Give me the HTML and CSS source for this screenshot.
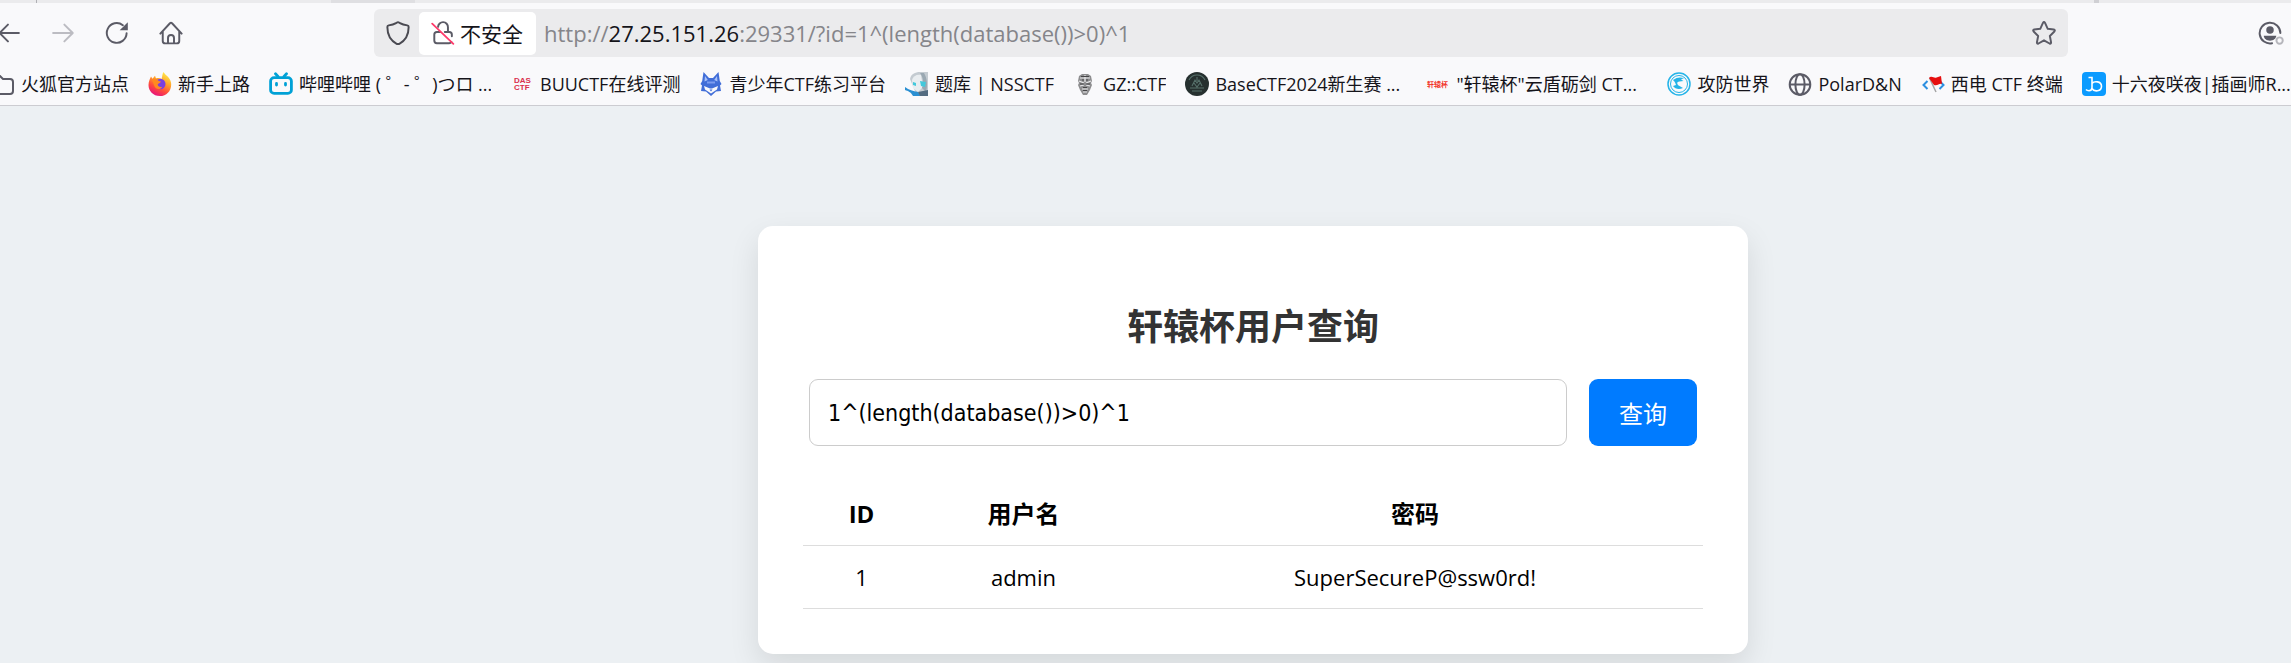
FILE: index.html
```html
<!DOCTYPE html>
<html lang="zh-CN">
<head>
<meta charset="utf-8">
<title>轩辕杯用户查询</title>
<link rel="stylesheet" href="styles.css">
</head>
<body>
<header class="browser">
  <div class="tabstrip"><span class="tick"></span><span class="tab-edge"></span><span class="tick tick-end"></span></div>
  <div class="toolbar">
    <nav class="nav" aria-label="导航">
      <button class="tool" aria-label="后退"><svg viewBox="0 0 16 16"><path d="M14.6 8H2M7.3 2.4 1.7 8l5.6 5.6" /></svg></button>
      <button class="tool tool-off" aria-label="前进" disabled><svg viewBox="0 0 16 16"><path d="M1.4 8h13M8.9 2.4 14.5 8l-5.6 5.6" /></svg></button>
      <button class="tool" aria-label="刷新"><svg viewBox="0 0 16 16"><path d="M14.4 8.2A6.6 6.6 0 1 1 11.9 2.8" /><path class="solid" d="M15.2.9v5.2H9.8z" /></svg></button>
      <button class="tool" aria-label="主页"><svg viewBox="0 0 16 16"><path d="M.9 8.4 7.3 1.5q.7-.6 1.4 0l6.4 6.9M2.5 7v6.3q0 1.6 1.6 1.6h7.8q1.6 0 1.6-1.6V7M6 14.8v-3.5a2 2 0 0 1 4 0v3.5" /></svg></button>
    </nav>
    <div class="urlbar">
      <button class="shield" aria-label="跟踪保护"><svg viewBox="0 0 16 16"><path d="M8 .8c.5 0 .8.3 1.300.6 1.500.9 3.200 1.300 4.900 1.500.6.100.9.500.9 1.100 0 4.700-1.600 8.700-6.200 11.200q-.9.400-1.800 0C2.500 12.700.9 8.700.9 4c0-.6.3-1 .9-1.100 1.700-.2 3.400-.6 4.900-1.500.5-.3.800-.6 1.300-.6z" /></svg></button>
      <button class="identity"><svg viewBox="0 0 16 16"><path d="M4.700 3.900A3.300 3.300 0 0 1 11.300 4.200v3M2.200 13V9q0-1.700 1.700-1.700h2.200M9.200 7.300h3q1.700 0 1.700 1.700v1.200M2.200 13q0 1.800 1.700 1.800h8.200q1 0 1.500-.7" /><path class="slash" d="M.8 1.800 14.900 15.200" /></svg><span>不安全</span></button>
      <div class="url">http://<b>27.25.151.26</b>:29331/?id=1^(length(database())&gt;0)^1</div>
      <button class="star" aria-label="添加书签"><svg viewBox="0 0 16 16"><path d="M7.300 1.300q.7-1.200 1.400 0l1.800 3.900 4 .5q1.200.3.4 1.300L11.900 10l.8 4.200q.1 1.200-1 .8L8 12.900 4.300 15q-1.100.4-1-.8L4.100 10 1.100 7q-.8-1 .4-1.300l4-.5z" /></svg></button>
    </div>
    <button class="tool account" aria-label="账户"><svg viewBox="0 0 18 16"><path d="M9.400 14.800A6.900 6.900 0 1 1 14.900 8" /><circle class="solid" cx="8" cy="6" r="2.500" /><path class="solid" d="M3.800 9.800h8.400c-.2 2-2 3.300-4.200 3.300s-4-1.300-4.200-3.300z" /><circle class="badge" cx="14.400" cy="13" r="2.100" /></svg></button>
  </div>
  <nav class="bookmarks" aria-label="书签">
    <a class="bm" href="#"><svg viewBox="0 0 24 24"><path class="line" d="M1 19V6q0-2 2-2h6l3 3h7q3 0 3 3v9q0 3-3 3H4q-3 0-3-3z" /></svg><span>火狐官方站点</span></a>
    <a class="bm" href="#"><svg viewBox="0 0 24 24">
      <defs><linearGradient id="fx" x1=".8" y1="0" x2=".3" y2="1"><stop offset="0" stop-color="#fff44f"/><stop offset=".4" stop-color="#ffa02a"/><stop offset=".7" stop-color="#ff4a3d"/><stop offset="1" stop-color="#e6107f"/></linearGradient></defs>
      <path fill="url(#fx)" d="M15.500 0c1.500 3 6.500 5 7.500 10.500C24.200 18 19 24 12 24 5 24 .5 19 .5 13 .5 9.500 2 6.500 3 4.500l1.500 2.300L7 3.800 8 6.500C10 5.600 12 6 13.500 7 14.500 5 14 2 15.500 0z"/><circle cx="12.300" cy="12" r="5.200" fill="#7a3fe0"/><path fill="#ff8a1f" d="M4 7c2 0 4-.5 5 0 .6 1.400 2 2.200 4 2.500-.5 1.600-2.800 1.800-3.300 3 .1 2 2.200 3 4.600 2.200C12.500 18 7 18 6 13 5.500 11 4 9 4 7z"/></svg><span>新手上路</span></a>
    <a class="bm bm-cut" href="#"><svg viewBox="0 0 24 24"><g fill="none" stroke="#00a1d6" stroke-width="2.800" stroke-linecap="round"><rect x="1.600" y="5.600" width="20.800" height="15.800" rx="3.500"/><path d="M6.500 1.800 9 4.500M17.500 1.800 15 4.500M7.500 11.500v1.500M16.500 11.500v1.500"/></g></svg><span>哔哩哔哩 ( ゜- ゜)つロ ...</span></a>
    <a class="bm" href="#"><svg viewBox="0 0 24 24"><g class="mini" fill="#d9304c" font-size="8"><text x="4" y="11">DAS</text><text x="4" y="18">CTF</text></g></svg><span>BUUCTF在线评测</span></a>
    <a class="bm" href="#"><svg viewBox="0 0 24 24"><path fill="#416ed8" d="M4.500 0 10 6h4l5.500-6 1.300 9 1.700 3-1.500 1.500 1 5.500-5 .5L12 24l-5-4.500-5-.5 1-5.500L1.500 12l1.700-3z"/><path fill="#a9c2fa" d="m6 4 2.800 4L5.500 9.500zm12 0-2.800 4 3.300 1.500z"/><path fill="#f9f9fb" d="m5 14 6 2.500h2l6-2.500-1 3.500-6 4L6 17.500z"/><path fill="#7d9df0" d="M8 9.500h8v2H8z"/><path fill="#416ed8" d="M10.500 17.500h3L12 19.500z"/></svg><span>青少年CTF练习平台</span></a>
    <a class="bm" href="#"><svg viewBox="0 0 24 24"><path fill="#c4cbd1" d="M5 7C6 2 10 0 15 0h8v24H12z"/><path fill="#e9edf0" d="M7 8c1-4 5-6 9-5l2 12-5 5-5-4z"/><path fill="#9aa8b2" d="M15 1c3 4 4 9 2 15l4 4C23 13 22 6 19 1z"/><path fill="#43c9dc" d="m15 9 6 1-1 5-4-1zM8 10l3 1v3l-3-1z"/><path fill="#2a8fd2" d="M0 15c4 3 8 4 13 5l3 4H8C6 20 3 19 0 18z"/><path fill="#536b80" d="m13 20 10-2v6h-8z"/></svg><span>题库 | NSSCTF</span></a>
    <a class="bm" href="#"><svg viewBox="0 0 24 24"><path fill="#8d8d8f" d="M9 2h6l3 2 1 5-1 2 1 2-2 5-3 5h-4l-3-5-2-5 1-2-1-2 1-5z"/><path fill="none" stroke="#e8e8ea" stroke-width="1.200" d="M7 6h10M12 3v7M6 9l5 2M18 9l-5 2M7 14l4-1M17 14l-4-1M9 17h6M10 20h4"/><path fill="none" stroke="#454547" stroke-width="1.200" d="M8 4.500h8M7 12h4M13 12h4M10 15.500h4M9 8h2M13 8h2M10 18.500h4"/></svg><span>GZ::CTF</span></a>
    <a class="bm bm-cut" href="#"><svg viewBox="0 0 24 24"><circle cx="12" cy="12" r="12" fill="#26302f"/><path fill="none" stroke="#56706a" stroke-width="1.100" d="M4 8c2-4 5-5 8-5s6 1 8 5M12 5v4M7 14l3-6 2 3 2-3 3 6M5 16h14M7 19h10M9 11l3 4 3-4"/></svg><span>BaseCTF2024新生赛 ...</span></a>
    <a class="bm bm-cut" href="#"><svg viewBox="0 0 24 24"><text class="mini" x="1" y="15" fill="#f2352c" font-size="7">轩辕杯</text></svg><span>"轩辕杯"云盾砺剑 CT...</span></a>
    <a class="bm" href="#"><svg viewBox="0 0 24 24"><g fill="none" stroke="#25b4e8"><circle cx="12" cy="12" r="11" stroke-width="1.500"/><circle cx="12" cy="12" r="8.500" stroke-width="1"/></g><path fill="#25b4e8" d="M6 8c4-3 7-3 11-2l-3 1.500 2.500 1.500-4 .5c-3 0-3 3 0 4.500l3.500 2c-4 2-8 1-10-2l3-1c-1-3-1-3-3-5z"/></svg><span>攻防世界</span></a>
    <a class="bm" href="#"><svg viewBox="0 0 24 24"><g fill="none" stroke="#5b5b66" stroke-width="2"><circle cx="12" cy="12.500" r="10.300"/><ellipse cx="12" cy="12.500" rx="4.600" ry="10.300"/><path d="M2 12.500h20"/></g></svg><span>PolarD&amp;N</span></a>
    <a class="bm" href="#"><svg viewBox="0 0 24 24"><path fill="none" stroke="#2c8fe0" stroke-width="2" d="M6.500 9 2.500 13l4 4M18.500 9l4 4-4 4"/><path fill="none" stroke="#a5a5a5" stroke-width="1.500" d="m8.500 6 6.500 14"/><path fill="#e60f0f" d="M8 6c3-3 5 1 7.500-.5L20 4l1 8c-3-1-4 2-8 1z"/></svg><span>西电 CTF 终端</span></a>
    <a class="bm bm-cut" href="#"><svg viewBox="0 0 24 24"><rect width="24" height="24" rx="4" fill="#0b9bff"/><path fill="none" stroke="#fff" stroke-width="1.600" d="M6.500 5.500h3.500v10q0 3.200-3 3.200-2 0-3-1.200M10 11.500c2-2.600 9.500-2.600 9.500 2.700 0 5.500-7.500 5.800-9.500 2.300"/></svg><span>十六夜咲夜|插画师R...</span></a>
  </nav>
</header>
<main class="page">
  <section class="card">
    <h2>轩辕杯用户查询</h2>
    <form class="search">
      <input type="text" name="id" aria-label="用户 ID" value="1^(length(database())&gt;0)^1">
      <button type="submit">查询</button>
    </form>
    <table class="result">
      <thead><tr><th class="col-id">ID</th><th class="col-name">用户名</th><th>密码</th></tr></thead>
      <tbody><tr><td>1</td><td>admin</td><td>SuperSecureP@ssw0rd!</td></tr></tbody>
    </table>
  </section>
</main>
</body>
</html>
```
FILE: styles.css
```css
* { box-sizing: border-box; }
body {
  margin: 0;
  min-height: 100vh;
  display: flex;
  flex-direction: column;
  overflow: hidden;
  background: #ecf0f3;
  color: #000;
  font-family: "Open Sans", "Noto Sans CJK SC", sans-serif;
}
button { border: 0; padding: 0; background: none; font: inherit; color: inherit; }
svg { flex: none; display: block; }

.browser { background: #f9f9fb; border-bottom: 1px solid #ccccd1; color: #15141a; }
.tabstrip { height: 3px; background: #ebebed; display: flex; padding: 0 192px 0 36px; }
.tick { width: 1px; background: #b0b0b5; }
.tick-end { width: 5px; margin-left: auto; background: #d0d0d4; }
.tab-edge { width: 84px; margin-left: 294px; background: #dfdfe2; }

.toolbar { display: flex; align-items: center; padding: 6px 0; }
.nav { display: flex; gap: 6px; margin-left: -15px; }
.tool { width: 48px; height: 48px; display: flex; align-items: center; justify-content: center; flex: none; color: #5b5b66; }
.tool svg, .shield svg, .identity svg, .star svg { width: 24px; height: 24px; fill: none; stroke: currentColor; stroke-width: 1.3; stroke-linecap: round; stroke-linejoin: round; }
.tool .solid { fill: currentColor; stroke: none; }
.tool .badge { stroke: #b5b5bb; }
.tool-off { color: #bcbcc2; }
.account { margin-right: -4px; }
.account svg { width: 27px; }

.urlbar { flex: 1; min-width: 0; height: 48px; margin: 0 179px; padding: 3px 12px 3px 0; display: flex; align-items: center; background: #ebebed; border-radius: 6px; }
.shield { width: 45px; padding-left: 12px; color: #4a4a52; }
.identity { height: 43px; width: 117px; padding: 0 12px; display: flex; align-items: center; gap: 5px; background: #fff; border-radius: 5px; font-size: 21px; white-space: nowrap; color: #15141a; }
.identity svg { color: #5b5b66; }
.identity .slash { stroke: #ff3b6b; stroke-width: 1.2; }
.url { flex: 1; padding-left: 8px; font-size: 22px; line-height: 32px; white-space: nowrap; overflow: hidden; color: #85858a; }
.url b { font-weight: 400; color: #15141a; }
.star { color: #5b5b66; }

.bookmarks { display: flex; gap: 19px; height: 42px; align-items: center; margin-left: -9px; font-size: 18px; white-space: nowrap; }
.bm { display: flex; align-items: center; gap: 6px; flex: none; color: #15141a; text-decoration: none; }
.bm svg { width: 24px; height: 24px; }
.bm span { line-height: 27px; overflow: hidden; }
.bm-cut { width: 222px; }
.line { fill: none; stroke: #5b5b66; stroke-width: 2; }
.mini { font-family: "Liberation Sans", "Noto Sans CJK SC", sans-serif; font-weight: 700; }

.page { flex: 1; display: flex; justify-content: center; align-items: flex-start; padding: 120px 0 0 215px; }
.card { width: 100%; max-width: 990px; padding: 45px; background: #fff; border-radius: 15px; box-shadow: 0 12px 30px rgba(0, 0, 0, .1); }
.card h2 { margin: 32px 0 28px; font-size: 36px; line-height: 48px; text-align: center; color: #333; }
.search { display: flex; gap: 22px; padding: 0 6px; }
.search input { flex: 1; min-width: 0; height: 67px; padding: 0 18px; border: 1px solid #ccc; border-radius: 9px; background: #fff; color: #000; font-family: "DejaVu Sans Condensed", sans-serif; font-size: 23px; }
.search button { padding: 0 30px; border-radius: 9px; background: #007bff; color: #fff; font-size: 24px; }
.result { width: 100%; margin-top: 37px; border-collapse: collapse; table-layout: fixed; text-align: center; line-height: 32px; }
.result th, .result td { padding: 15px; border-bottom: 1px solid #ddd; }
.result th { font-size: 24px; }
.result td { font-size: 22px; }
.col-id { width: 13%; }
.col-name { width: 23%; }
```
